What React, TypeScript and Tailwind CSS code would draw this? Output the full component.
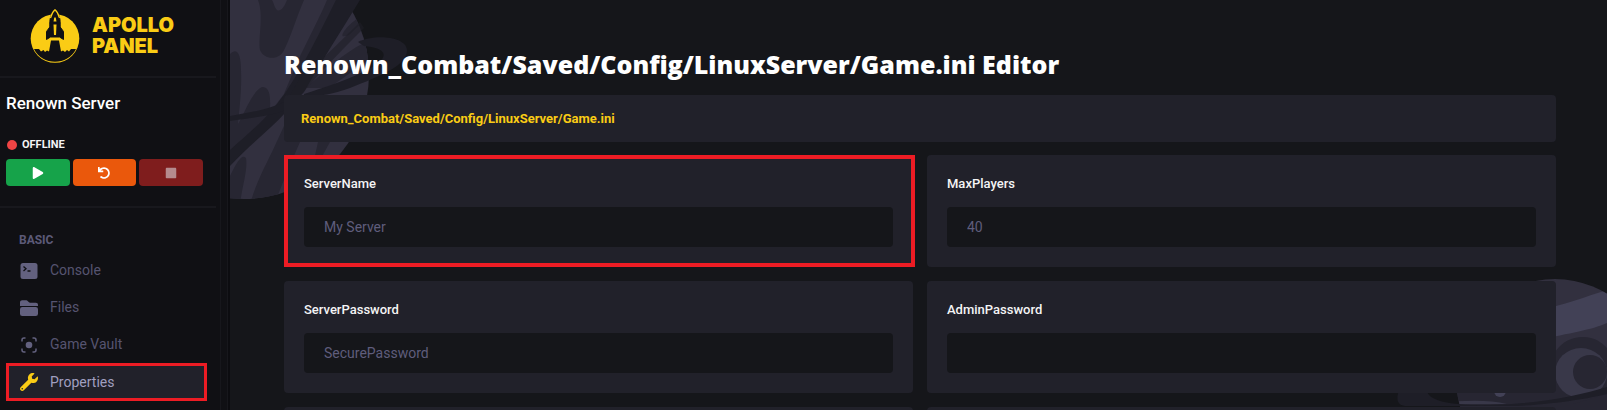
import { useState } from "react";
import { FaFolder, FaPlay, FaStop, FaUndo, FaWrench } from "react-icons/fa";
import type { ReactNode } from "react";

type Field = {
  name: string;
  placeholder: string;
  highlighted?: boolean;
};

const FIELDS: Field[] = [
  { name: "ServerName", placeholder: "My Server", highlighted: true },
  { name: "MaxPlayers", placeholder: "40" },
  { name: "ServerPassword", placeholder: "SecurePassword" },
  { name: "AdminPassword", placeholder: "" },
];

function RocketLogo() {
  return (
    <svg viewBox="0 0 50 54" className="h-[54px] w-[50px] shrink-0" aria-hidden="true">
      <circle cx="25" cy="29.5" r="24.3" fill="#facc15" />
      <path
        d="M4 40 H9 L11 42.5 13.5 41 15 43 17 41.5 19 42.5 21 31.5 H29 L31 42.5 33 41.5 35 43 37 41 39 42.5 41 40 H46 C42 48.5 33.5 52.8 25 52.8 C16.5 52.8 8 48.500 4 40 Z"
        fill="#101014"
      />
      <path
        d="M25 1 C20.5 5 19.5 10 19.8 18 L16.5 22.5 V30.5 L20.5 28 H29.5 L33.5 30.5 V22.5 L30.2 18 C30.5 10 29.5 5 25 1 Z"
        fill="#101014"
        stroke="#101014"
        strokeWidth="1"
      />
      <path
        d="M20.500 9 C21.500 5 23 2.500 25 0.800 C27 2.500 28.500 5 29.500 9"
        fill="none"
        stroke="#facc15"
        strokeWidth="1.200"
      />
      <path d="M23.500 12.500 L24.300 8.500 H25.700 L26.500 12.500 Z" fill="#facc15" />
      <path d="M23.500 15.500 H26.500 L26 26 H24 Z" fill="#facc15" />
    </svg>
  );
}

function ConsoleIcon() {
  return (
    <svg viewBox="0 0 18 18" className="size-[18px]" aria-hidden="true">
      <rect x="0.5" y="1" width="17" height="16" rx="2.5" fill="currentColor" />
      <path d="M3.5 4.5 L6 6.8 3.5 9 M7.5 9 H10.5" fill="none" stroke="#101014" strokeWidth="1.3" />
    </svg>
  );
}

function FilesIcon() {
  return (
    <svg viewBox="0 0 20 18" className="h-[18px] w-5 shrink-0" aria-hidden="true">
      <path
        d="M1 7 V3.5 C1 2 2 1.2 3.2 1.2 H7.5 C8.8 1.2 9.5 3.7 11 3.7 H16.8 C18.2 3.7 19 4.5 19 6 V7 Z"
        fill="currentColor"
      />
      <rect x="1" y="8" width="18" height="9" rx="2.3" fill="currentColor" />
    </svg>
  );
}

function VaultIcon() {
  return (
    <svg viewBox="0 0 18 18" className="size-[18px]" aria-hidden="true">
      <circle cx="9" cy="9" r="3.3" fill="currentColor" />
      <path
        d="M2 5.5 V4 Q2 2 4 2 H5.5 M12.5 2 H14 Q16 2 16 4 V5.5 M16 12.5 V14 Q16 16 14 16 H12.5 M5.5 16 H4 Q2 16 2 14 V12.5"
        fill="none"
        stroke="currentColor"
        strokeWidth="1.5"
      />
    </svg>
  );
}

function LeftPlanet() {
  return (
    <svg
      viewBox="0 0 190 205"
      className="pointer-events-none absolute left-0 top-0 h-[205px] w-[190px]"
      aria-hidden="true"
    >
      <defs>
        <clipPath id="left-planet">
          <circle cx="14" cy="74" r="125" />
        </clipPath>
      </defs>
      <g clipPath="url(#left-planet)">
        <rect width="190" height="205" fill="#32303f" />
        <g fill="#272632">
          <path d="M28 0 C34 15 28 38 30 50 C34 60 48 60 53 52 C60 40 66 18 74 0 H57 C54 8 50 12 47 10 C44 7 44 3 42 0 Z" />
          <path d="M0 54 C8 46 11 56 11 70 C12 90 9 112 8 124 C16 110 22 92 32 87 C42 86 40 104 40 112 L62 84 L100 28 L116 0 H97 C86 26 72 50 64 70 L48 108 L0 160 Z" />
          <path d="M0 176 C8 160 12 154 16 158 C18 170 12 186 10 205 H0 Z" />
          <path d="M20 205 C24 188 34 168 42 152 L54 126 L70 118 V142 C62 160 54 180 44 205 Z" />
          <path d="M88 142 L100 142 L90 160 H84 Z M115 36 C109 38 114 28 128 18 L134 22 C124 28 121 36 115 36 Z" />
          <path d="M76 88 C96 70 112 54 134 43 L142 58 C128 66 112 80 98 88 Z" />
        </g>
      </g>
      <g fill="#1e1e27">
        <path d="M106 0 H130 C112 30 92 60 74 92 L56 112 C40 130 20 144 0 166 V150 C18 134 32 122 44 108 C68 78 88 36 106 0 Z" />
        <path d="M0 116 C24 112 44 108 58 100 L60 108 C44 116 20 118 0 121 Z" />
        <path d="M74 94 C92 88 120 80 144 66 C160 56 156 48 134 46 L128 42 C144 34 176 36 177 50 C177 66 150 76 120 88 C104 94 90 96 74 97 Z" />
        <path d="M60 95 L70 78 C92 60 112 40 130 22 L134 28 C116 46 92 70 70 96 Z" opacity="0.6" />
      </g>
    </svg>
  );
}

function RightPlanet() {
  return (
    <svg
      viewBox="0 0 220 140"
      className="pointer-events-none absolute right-0 top-[270px] h-[140px] w-[220px]"
      aria-hidden="true"
    >
      <defs>
        <clipPath id="right-planet">
          <circle cx="168" cy="108" r="99" />
        </clipPath>
      </defs>
      <g clipPath="url(#right-planet)">
        <rect width="220" height="140" fill="#32303f" />
        <path d="M150 40 C176 36 200 26 220 20 V53 C204 60 184 63 150 70 Z" fill="#424156" />
        <path d="M60 120 H160 C158 92 170 67 196 67 C208 67 214 72 220 78 V140 H60 Z" fill="#272632" />
        <ellipse cx="194" cy="103" rx="26" ry="25" fill="#393849" />
        <circle cx="203" cy="102" r="17" fill="#272632" />
        <path d="M150 127 L186 127 L220 122 V124 L186 134 H150 Z" fill="#272632" />
        <circle cx="113" cy="121" r="6" fill="#424156" />
        <path d="M60 132 C84 130 104 130 120 134 H60 Z" fill="#393849" />
      </g>
      <path
        d="M12 120 C8 132 12 136 20 136 H130 C170 134 204 128 220 124 V117 C190 126 150 134 104 135 C70 136 40 132 40 120 Z"
        fill="#1e1e27"
      />
    </svg>
  );
}

function NavItem({ icon, label, active }: { icon: ReactNode; label: string; active?: boolean }) {
  return (
    <li>
      <a
        href="#"
        aria-current={active ? "page" : undefined}
        className={
          active
            ? "flex h-[38px] items-center gap-3 border-3 border-[#ed1c24] bg-[#21212a] pl-[11px] text-[#a09fc0]"
            : "flex h-[37px] items-center gap-3 pl-[14px] text-[#565470]"
        }
      >
        <span className={active ? "flex w-[18px] justify-center text-[#facc15]" : "flex w-[18px] justify-center text-[#63617f]"}>
          {icon}
        </span>
        {label}
      </a>
    </li>
  );
}

function Sidebar() {
  return (
    <aside className="flex w-[230px] shrink-0 border-r-2 border-[#0c0c10] bg-[#101014]">
      <div className="flex-1">
        <div className="flex h-[76px] items-center gap-3 pb-[5px] pl-[30px]">
          <RocketLogo />
          <p className="font-[Inter,'Open_Sans',sans-serif] text-[20px] leading-[21px] font-black text-[#facc15]">
            <span className="block">APOLLO</span>
            <span className="block">PANEL</span>
          </p>
        </div>

        <div className="mr-1 h-[132px] border-y-2 border-[#18181d] pl-[6px]">
          <h2 className="pt-[13px] text-[17px] leading-6 font-medium text-white">Renown Server</h2>
          <p className="mt-[22px] flex h-4 items-center gap-[5px] pl-px text-[11px] font-bold text-[#f4f4f5]">
            <span className="size-[10px] rounded-full bg-[#ef4444]" />
            OFFLINE
          </p>
          <div className="mt-[6px] mr-[13px] grid grid-cols-3 gap-[3px] text-white">
            <button aria-label="Start" className="flex h-[27px] items-center justify-center rounded bg-[#16a34a]">
              <FaPlay size={12} />
            </button>
            <button aria-label="Restart" className="flex h-[27px] items-center justify-center rounded bg-[#ea580c]">
              <FaUndo size={12} />
            </button>
            <button aria-label="Stop" className="flex h-[27px] items-center justify-center rounded bg-[#7f1d1d] text-[#b58b8e]">
              <FaStop size={12} />
            </button>
          </div>
        </div>

        <nav className="pr-[13px] pl-[6px] text-[14px]">
          <h3 className="pt-[23px] pl-[13px] text-[12px] leading-[18px] font-bold text-[#5c5a78]">BASIC</h3>
          <ul className="mt-[3px]">
            <NavItem icon={<ConsoleIcon />} label="Console" />
            <NavItem icon={<FilesIcon />} label="Files" />
            <NavItem icon={<VaultIcon />} label="Game Vault" />
            <NavItem icon={<FaWrench size={18} />} label="Properties" active />
          </ul>
        </nav>
      </div>
      <div className="w-2 border-x border-[#17171c]" />
    </aside>
  );
}

function FieldCard({ field }: { field: Field }) {
  const [value, setValue] = useState("");

  return (
    <div
      className={
        field.highlighted
          ? "-mr-[2px] border-4 border-[#ed1c24] bg-[#21212a] py-4 pr-[18px] pl-4"
          : "rounded bg-[#21212a] p-5"
      }
    >
      <label htmlFor={field.name} className="block text-[13px] leading-[18px] font-medium text-[#f4f4f5]">
        {field.name}
      </label>
      <input
        id={field.name}
        value={value}
        placeholder={field.placeholder}
        onChange={(e) => setValue(e.target.value)}
        className="mt-[14px] block h-10 w-full rounded bg-[#15161a] px-5 text-[14px] text-white outline-none placeholder:text-[#5f5d7c]"
      />
    </div>
  );
}

export default function App() {
  return (
    <div className="flex h-screen overflow-hidden bg-[#15161a] font-[Roboto,'Liberation_Sans',sans-serif]">
      <Sidebar />
      <main className="relative min-w-0 flex-1 overflow-hidden">
        <LeftPlanet />
        <RightPlanet />
        <div className="relative pt-[46px] pr-[51px] pl-[54px]">
          <h1 className="font-['Open_Sans','Noto_Sans',sans-serif] text-[25px] leading-9 font-extrabold text-white">
            Renown_Combat/Saved/Config/LinuxServer/Game.ini Editor
          </h1>
          <div className="mt-[13px] flex h-[47px] items-center rounded bg-[#21212a] px-[17px]">
            <a href="#" className="text-[13px] font-bold text-[#facc15]">
              Renown_Combat/Saved/Config/LinuxServer/Game.ini
            </a>
          </div>
          <div className="mt-[13px] grid grid-cols-2 gap-[14px]">
            {FIELDS.map((field) => (
              <FieldCard key={field.name} field={field} />
            ))}
            <div className="h-28 rounded bg-[#21212a]" />
            <div className="h-28 rounded bg-[#21212a]" />
          </div>
        </div>
      </main>
    </div>
  );
}
